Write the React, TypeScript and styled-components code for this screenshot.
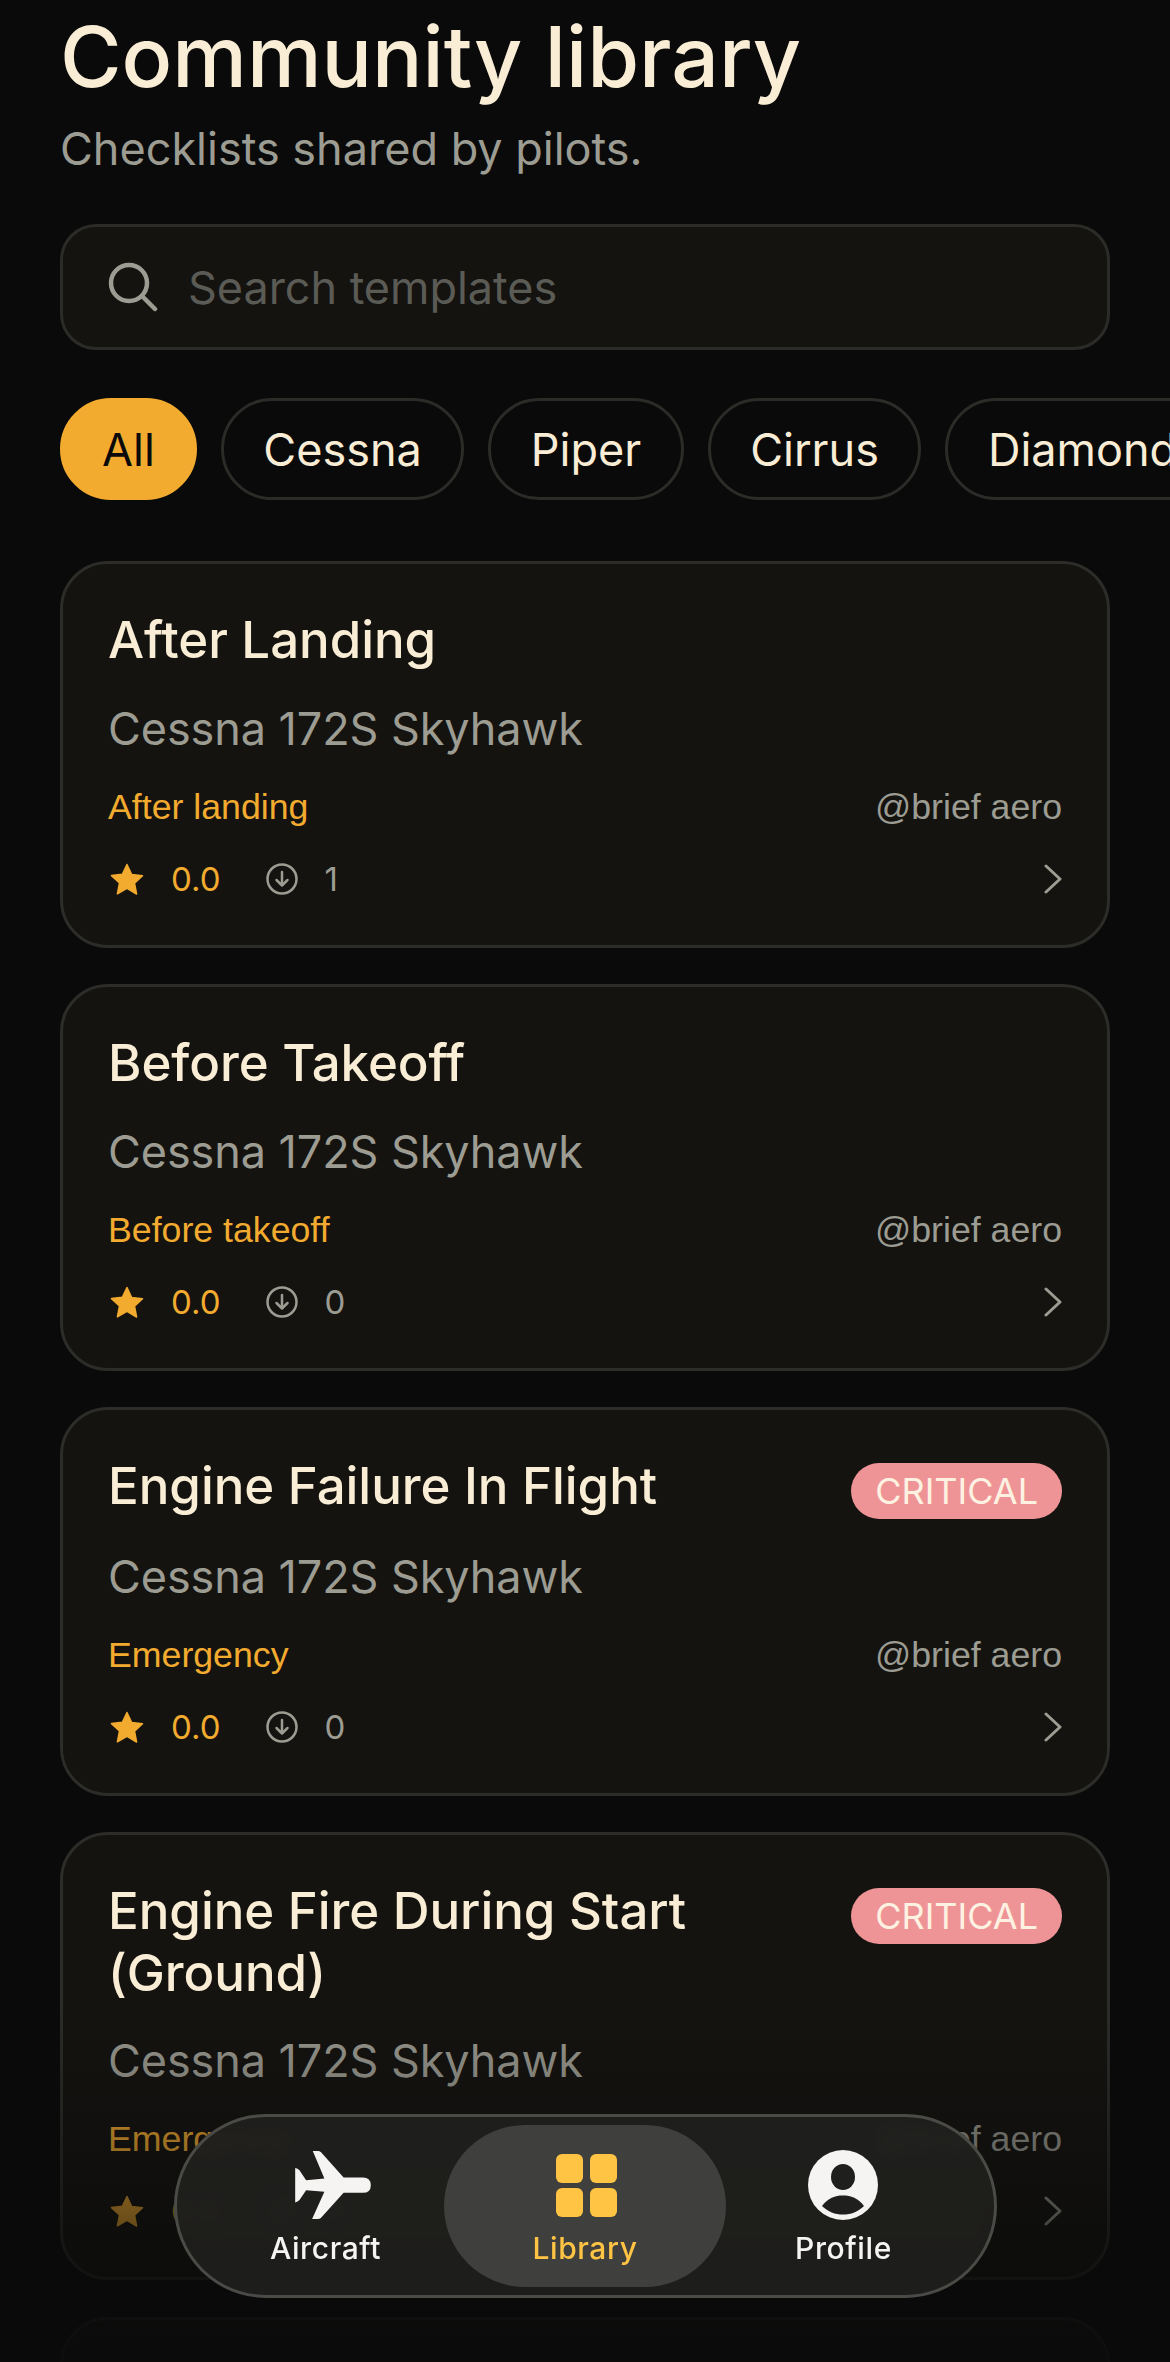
import React from "react";
import styled, { createGlobalStyle } from "styled-components";

const Global = createGlobalStyle`
  html, body { margin: 0; padding: 0; background: #0a0a0a; }
  body { font-family: Inter, "Noto Sans", sans-serif; font-variant-ligatures: none; }
  * { box-sizing: border-box; }
`;

const Screen = styled.div`
  position: relative;
  width: 1170px;
  height: 2362px;
  overflow: hidden;
  background: #0a0a0a;
  padding: 7px 60px 0;
`;
const Title = styled.h1`
  margin: 0;
  font-size: 84px;
  line-height: 100px;
  font-weight: 500;
  color: #f9edd5;
`;
const Subtitle = styled.p`
  margin: 13px 0 0;
  font-size: 45px;
  line-height: 58px;
  color: #9c9c92;
`;
const Search = styled.div`
  margin-top: 46px;
  height: 126px;
  border: 3px solid #2b2b28;
  border-radius: 36px;
  background: #141310;
  display: flex;
  align-items: center;
  gap: 30px;
  padding: 0 45px;
`;
const Placeholder = styled.span`
  font-size: 45px;
  color: #5b5b56;
  letter-spacing: -0.05px;
`;
const Chips = styled.div`
  margin-top: 48px;
  display: flex;
  gap: 24px;
  width: 1200px;
`;
const Chip = styled.div<{ $active?: boolean }>`
  flex: none;
  height: 102px;
  border-radius: 51px;
  padding: 0 ${(p) => (p.$active ? 39 : 39.5)}px;
  display: flex;
  align-items: center;
  font-size: 45px;
  color: ${(p) => (p.$active ? "#0a0a0a" : "#f9edd5")};
  background: ${(p) => (p.$active ? "#f2ab2f" : "transparent")};
  border: 3px solid ${(p) => (p.$active ? "#f2ab2f" : "#2b2b28")};
`;
const List = styled.div`
  margin-top: 61px;
  display: flex;
  flex-direction: column;
  gap: 36.5px;
`;
const Card = styled.article`
  border: 3px solid #2c2c29;
  border-radius: 48px;
  background: #141310;
  padding: 45px 45px 44px;
`;
const CardHead = styled.div`
  display: flex;
  justify-content: space-between;
  align-items: flex-start;
  gap: 36px;
`;
const CardTitle = styled.h2`
  margin: 0;
  font-size: 51px;
  line-height: 61.5px;
  font-weight: 500;
  letter-spacing: -0.05px;
  color: #f9edd5;
`;
const Badge = styled.span`
  flex: none;
  margin-top: 7.5px;
  height: 56px;
  border-radius: 28px;
  padding: 0 24px;
  background: #ef9496;
  color: #fdf2e2;
  font-size: 36px;
  line-height: 56px;
`;
const Vehicle = styled.div`
  margin-top: 29px;
  font-size: 45px;
  line-height: 58px;
  letter-spacing: -0.08px;
  color: #9c9c92;
`;
const MetaRow = styled.div`
  margin-top: 26px;
  display: flex;
  justify-content: space-between;
  font-family: "Liberation Sans", Arial, sans-serif;
  font-size: 35.7px;
  line-height: 46px;
`;
const Category = styled.span`
  color: #f2ab2f;
`;
const Author = styled.span`
  color: #9c9c92;
`;
const Stats = styled.div`
  margin-top: 27px;
  height: 44px;
  display: flex;
  align-items: center;
  font-size: 33px;
`;
const StarIcon = styled.svg`
  width: 34px;
  height: 32px;
  margin-left: 2px;
`;
const Rating = styled.span`
  margin-left: 27px;
  color: #f2ab2f;
`;
const DownloadIcon = styled.svg`
  width: 32px;
  height: 32px;
  margin-left: 46px;
`;
const Count = styled.span`
  margin-left: 26px;
  color: #9c9c92;
`;
const Chevron = styled.svg`
  margin-left: auto;
  width: 18px;
  height: 30px;
`;
const Fade = styled.div`
  position: absolute;
  left: 0;
  right: 0;
  bottom: 0;
  height: 362px;
  background: linear-gradient(to bottom, rgba(10,10,10,0) 0%, rgba(10,10,10,.33) 36%, rgba(10,10,10,.55) 58%, rgba(10,10,10,.82) 83%, rgba(10,10,10,.9) 100%);
`;
const Nav = styled.nav`
  position: absolute;
  left: 174px;
  top: 2114px;
  width: 823px;
  height: 184px;
  border-radius: 92px;
  border: 3px solid #4a4a47;
  background: rgba(31,31,29,.93);
  backdrop-filter: blur(7px);
  display: grid;
  grid-template-columns: 237px 282px 235px;
  padding: 8px 30px;
`;
const NavItem = styled.div<{ $active?: boolean }>`
  border-radius: 81px;
  background: ${(p) => (p.$active ? "#3f3f3d" : "transparent")};
  color: ${(p) => (p.$active ? "#ffc444" : "#f5f4f2")};
  display: flex;
  flex-direction: column;
  align-items: center;
  padding-top: 26px;
  font-size: 30px;
  line-height: 36px;
  font-weight: 500;
  letter-spacing: 0.6px;
`;
const IconSlot = styled.div`
  height: 68px;
  margin-bottom: 11px;
  display: flex;
  align-items: center;
  justify-content: center;
`;
const PlaneIcon = styled.svg`
  width: 76px;
  height: 68px;
  margin-left: 14px;
  fill: #f5f4f2;
`;
const ProfileIcon = styled.svg`
  width: 70px;
  height: 70px;
  flex: none;
  margin-right: 2px;
`;
const LibraryGrid = styled.div`
  display: grid;
  grid-template-columns: 27px 27px;
  grid-template-rows: 29px 29px;
  gap: 5px 7px;
  margin-left: 3px;
`;
const LibraryCell = styled.span`
  background: #ffc444;
  border-radius: 6px;
`;

type Item = { title: string; category: string; count: string; critical?: boolean };
const items: Item[] = [
  { title: "After Landing", category: "After landing", count: "1" },
  { title: "Before Takeoff", category: "Before takeoff", count: "0" },
  { title: "Engine Failure In Flight", category: "Emergency", count: "0", critical: true },
  { title: "Engine Fire During Start (Ground)", category: "Emergency", count: "0", critical: true },
  { title: "Engine Fire In Flight", category: "Emergency", count: "0", critical: true },
];

export default function App() {
  return (
    <Screen>
      <Global />
      <Title>Community library</Title>
      <Subtitle>Checklists shared by pilots.</Subtitle>
      <Search>
        <svg width="50" height="50" viewBox="0 0 50 50" fill="none" stroke="#9c9c92" strokeWidth="4.5" strokeLinecap="round">
          <circle cx="21" cy="21" r="18" />
          <line x1="34" y1="34" x2="47" y2="47" />
        </svg>
        <Placeholder>Search templates</Placeholder>
      </Search>
      <Chips>
        <Chip $active>All</Chip>
        <Chip>Cessna</Chip>
        <Chip>Piper</Chip>
        <Chip>Cirrus</Chip>
        <Chip>Diamond</Chip>
      </Chips>
      <List>
        {items.map((it) => (
          <Card key={it.title}>
            <CardHead>
              <CardTitle>{it.title}</CardTitle>
              {it.critical && <Badge>CRITICAL</Badge>}
            </CardHead>
            <Vehicle>Cessna 172S Skyhawk</Vehicle>
            <MetaRow>
              <Category>{it.category}</Category>
              <Author>@brief aero</Author>
            </MetaRow>
            <Stats>
              <StarIcon viewBox="0 0 34 32">
                <path
                  d="M17 1.5l4.7 10 10.8 1.3-8 7.4 2.1 10.8L17 25.3 7.400 30.800l2.100-10.800-8-7.400 10.800-1.300z"
                  fill="#f2ab2f"
                  stroke="#f2ab2f"
                  strokeWidth="1.500"
                  strokeLinejoin="round"
                />
              </StarIcon>
              <Rating>0.0</Rating>
              <DownloadIcon viewBox="0 0 32 32" fill="none" stroke="#9c9c92" strokeWidth="2.500" strokeLinecap="round" strokeLinejoin="round">
                <circle cx="16" cy="16" r="14.500" />
                <path d="M16 9v13M10.500 17l5.500 5.500 5.500-5.500" />
              </DownloadIcon>
              <Count>{it.count}</Count>
              <Chevron viewBox="0 0 18 30" fill="none" stroke="#9c9c92" strokeWidth="3" strokeLinecap="round" strokeLinejoin="round">
                <path d="M2 2l14 13L2 28" />
              </Chevron>
            </Stats>
          </Card>
        ))}
      </List>
      <Fade />
      <Nav>
        <NavItem>
          <IconSlot>
            <PlaneIcon viewBox="102 152 228 205">
              <path d="M306 232H248L180 156Q176 152 170 152H155L190 235L135 240L115 210Q110 204 102 203V307Q110 306 115 300L135 270L190 275L153 357H170Q176 357 180 353L248 278H306Q330 278 330 255Q330 232 306 232Z" />
            </PlaneIcon>
          </IconSlot>
          Aircraft
        </NavItem>
        <NavItem $active>
          <IconSlot>
            <LibraryGrid>
              <LibraryCell />
              <LibraryCell />
              <LibraryCell />
              <LibraryCell />
            </LibraryGrid>
          </IconSlot>
          Library
        </NavItem>
        <NavItem>
          <IconSlot>
            <ProfileIcon viewBox="0 0 70 70">
              <circle cx="35" cy="35" r="35" fill="#f5f4f2" />
              <ellipse cx="35" cy="27" rx="12" ry="13" fill="#1f1f1d" />
              <path d="M14 56C20 48 27 45.500 35 45.500S50 48 56 56C50 62 43 64.500 35 64.500S20 62 14 56Z" fill="#1f1f1d" />
            </ProfileIcon>
          </IconSlot>
          Profile
        </NavItem>
      </Nav>
    </Screen>
  );
}
